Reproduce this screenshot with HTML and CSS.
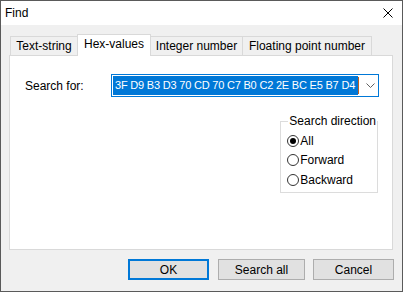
FILE: index.html
```html
<!DOCTYPE html>
<html lang="en">
<head>
    <meta charset="UTF-8">
    <title>Find</title>
    <link rel="stylesheet" href="styles.css">
</head>
<body>
    <div class="window">
        <div class="title-bar">
            <span class="title">Find</span>
            <svg class="close" width="10" height="10" viewBox="0 0 10 10">
                <path d="M0.5 0.5 L9.5 9.5 M9.5 0.5 L0.5 9.5" stroke="#000" stroke-width="1" fill="none"/>
            </svg>
        </div>

        <div class="tabs">
            <div class="tab tab-text">Text-string</div>
            <div class="tab tab-hex active">Hex-values</div>
            <div class="tab tab-int">Integer number</div>
            <div class="tab tab-float">Floating point number</div>
        </div>

        <div class="panel">
            <div class="search-row">
                <label class="search-label">Search for:</label>
                <div class="combo">
                    <span class="combo-value">3F D9 B3 D3 70 CD 70 C7 B0 C2 2E BC E5 B7 D4</span>
                    <span class="caret"></span>
                    <svg class="combo-arrow" width="9" height="5" viewBox="0 0 9 5">
                        <path d="M0.5 0.5 L4.5 4.5 L8.5 0.5" stroke="#606060" stroke-width="1" fill="none"/>
                    </svg>
                </div>
            </div>

            <fieldset class="direction">
                <legend>Search direction</legend>
                <div class="radio checked"><span class="dot"></span>All</div>
                <div class="radio"><span class="dot"></span>Forward</div>
                <div class="radio"><span class="dot"></span>Backward</div>
            </fieldset>
        </div>

        <div class="buttons">
            <button class="btn btn-ok">OK</button>
            <button class="btn btn-all">Search all</button>
            <button class="btn btn-cancel">Cancel</button>
        </div>
    </div>
</body>
</html>
```

FILE: styles.css
```css
* {
    box-sizing: border-box;
}

body {
    margin: 0;
    font-family: "Liberation Sans", Arial, sans-serif;
    font-size: 12px;
    color: #000;
}

.window {
    width: 403px;
    height: 292px;
    border: 1px solid #5a5a5a;
    background: #f0f0f0;
    display: flex;
    flex-direction: column;
}

.title-bar {
    height: 24px;
    background: #fff;
    display: flex;
    align-items: center;
    justify-content: space-between;
    padding: 0 9px 0 4px;
}

.title {
    line-height: 16px;
}

/* tabs */
.tabs {
    display: flex;
    align-items: flex-end;
    height: 21px;
    margin: 9px 0 0 9px;
}

.tab {
    height: 19px;
    border: 1px solid #d9d9d9;
    border-bottom: none;
    background: #f0f0f0;
    text-align: center;
    line-height: 19px;
    white-space: nowrap;
}

.tab-text {
    width: 68px;
}

.tab-hex {
    width: 74px;
    margin-left: -1px;
}

.tab-int {
    width: 93px;
    margin-left: -1px;
}

.tab-float {
    width: 130px;
    margin-left: -1px;
}

.tab.active {
    height: 22px;
    margin-bottom: -1px;
    background: #fff;
    position: relative;
    z-index: 1;
    line-height: 19px;
}

.panel {
    height: 195px;
    margin: 0 9px 0 8px;
    background: #fff;
    border: 1px solid #d9d9d9;
    display: flex;
    flex-direction: column;
    padding-top: 18px;
}

.search-row {
    display: flex;
    align-items: center;
    padding-left: 15px;
}

.search-label {
    width: 86px;
}

.combo {
    width: 268px;
    height: 23px;
    border: 1px solid #0078d7;
    padding: 1px;
    display: flex;
    align-items: center;
}

.combo-value {
    background: #0078d7;
    color: #fff;
    height: 19px;
    line-height: 19px;
    padding-left: 2px;
    width: 245px;
    font-size: 11px;
    letter-spacing: -0.2px;
    white-space: nowrap;
    overflow: hidden;
}

.caret {
    width: 1px;
    height: 17px;
    background: #c06020;
}

.combo-arrow {
    margin-left: 7px;
}

/* group box */
.direction {
    align-self: flex-end;
    width: 96px;
    margin: 16px 14px 0 0;
    border: 1px solid #dcdcdc;
    padding: 2px 0 2px 6px;
}

.direction legend {
    margin-left: 1px;
    padding: 0 1px;
    line-height: 16px;
    white-space: nowrap;
}

.radio {
    height: 19.5px;
    display: flex;
    align-items: center;
}

.dot {
    width: 12px;
    height: 12px;
    border: 1px solid #333;
    border-radius: 50%;
    background: #fff;
    margin-right: 1px;
    display: flex;
    align-items: center;
    justify-content: center;
}

.radio.checked .dot::after {
    content: "";
    width: 6px;
    height: 6px;
    border-radius: 50%;
    background: #000;
}

/* buttons */
.buttons {
    display: flex;
    justify-content: flex-end;
    margin: 9px 8px 0 0;
}

.btn {
    height: 21px;
    padding: 0;
    font: inherit;
    color: #000;
    background: #e1e1e1;
    border: 1px solid #adadad;
}

.btn-ok {
    width: 81px;
    border: 2px solid #0078d7;
}

.btn-all {
    width: 87px;
    margin-left: 9px;
}

.btn-cancel {
    width: 81px;
    margin-left: 8px;
}
```
